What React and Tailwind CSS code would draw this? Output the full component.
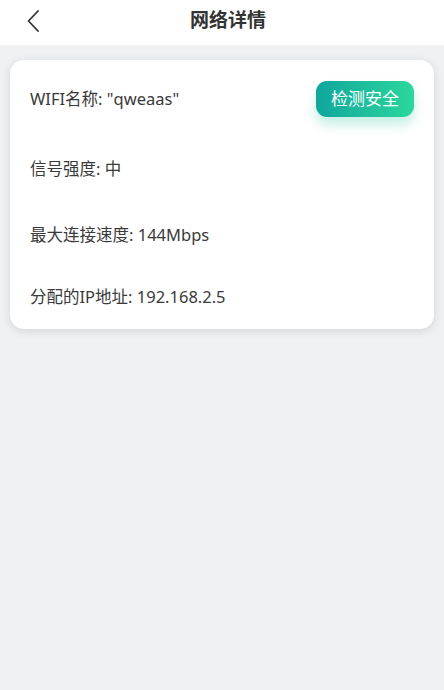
import React from 'react';

const rows = [
    { label: '信号强度: 中', h: 'h-[70px]' },
    { label: '最大连接速度: 144Mbps', h: 'h-[62px]' },
    { label: '分配的IP地址: 192.168.2.5', h: 'h-[63px]' },
];

const App = () => {
    return (
        <div
            className="w-[444px] h-[690px] bg-[#f0f1f3] flex flex-col"
            style={{ fontFamily: '"Noto Sans", "Noto Sans CJK SC", sans-serif' }}
        >
            {/* top bar */}
            <div className="h-[45px] bg-white flex items-center relative shrink-0">
                <button className="w-[60px] h-full flex items-center justify-center pl-[6px] -mt-[4px]">
                    <svg width="14" height="24" viewBox="0 0 14 24" fill="none">
                        <path d="M12 2 L2.5 12 L12 22" stroke="#333" strokeWidth="1.8" strokeLinecap="round" strokeLinejoin="round" />
                    </svg>
                </button>
                <h1 className="absolute left-[228px] -translate-x-1/2 -mt-[4px] text-[19px] font-bold text-[#333]">网络详情</h1>
            </div>

            <div className="px-[10px] pt-[15px]">
                <div className="bg-white rounded-[14px] shadow-[0_2px_10px_rgba(0,0,0,0.12)] pt-[4px] pl-[20px] pr-[20px]">
                    <div className="h-[70px] flex items-center justify-between">
                        <span className="text-[16.5px] text-[#3a3a3a]">WIFI名称: "qweaas"</span>
                        <button className="h-[36px] w-[98px] rounded-[11px] bg-gradient-to-r from-[#11a69d] to-[#2bd89b] text-white text-[17px] shadow-[0_8px_12px_rgba(32,190,150,0.25)]">
                            检测安全
                        </button>
                    </div>
                    {rows.map(r => (
                        <div key={r.label} className={`${r.h} flex items-center`}>
                            <span className="text-[16.5px] text-[#3a3a3a]">{r.label}</span>
                        </div>
                    ))}
                </div>
            </div>
        </div>
    );
};

export default App;
